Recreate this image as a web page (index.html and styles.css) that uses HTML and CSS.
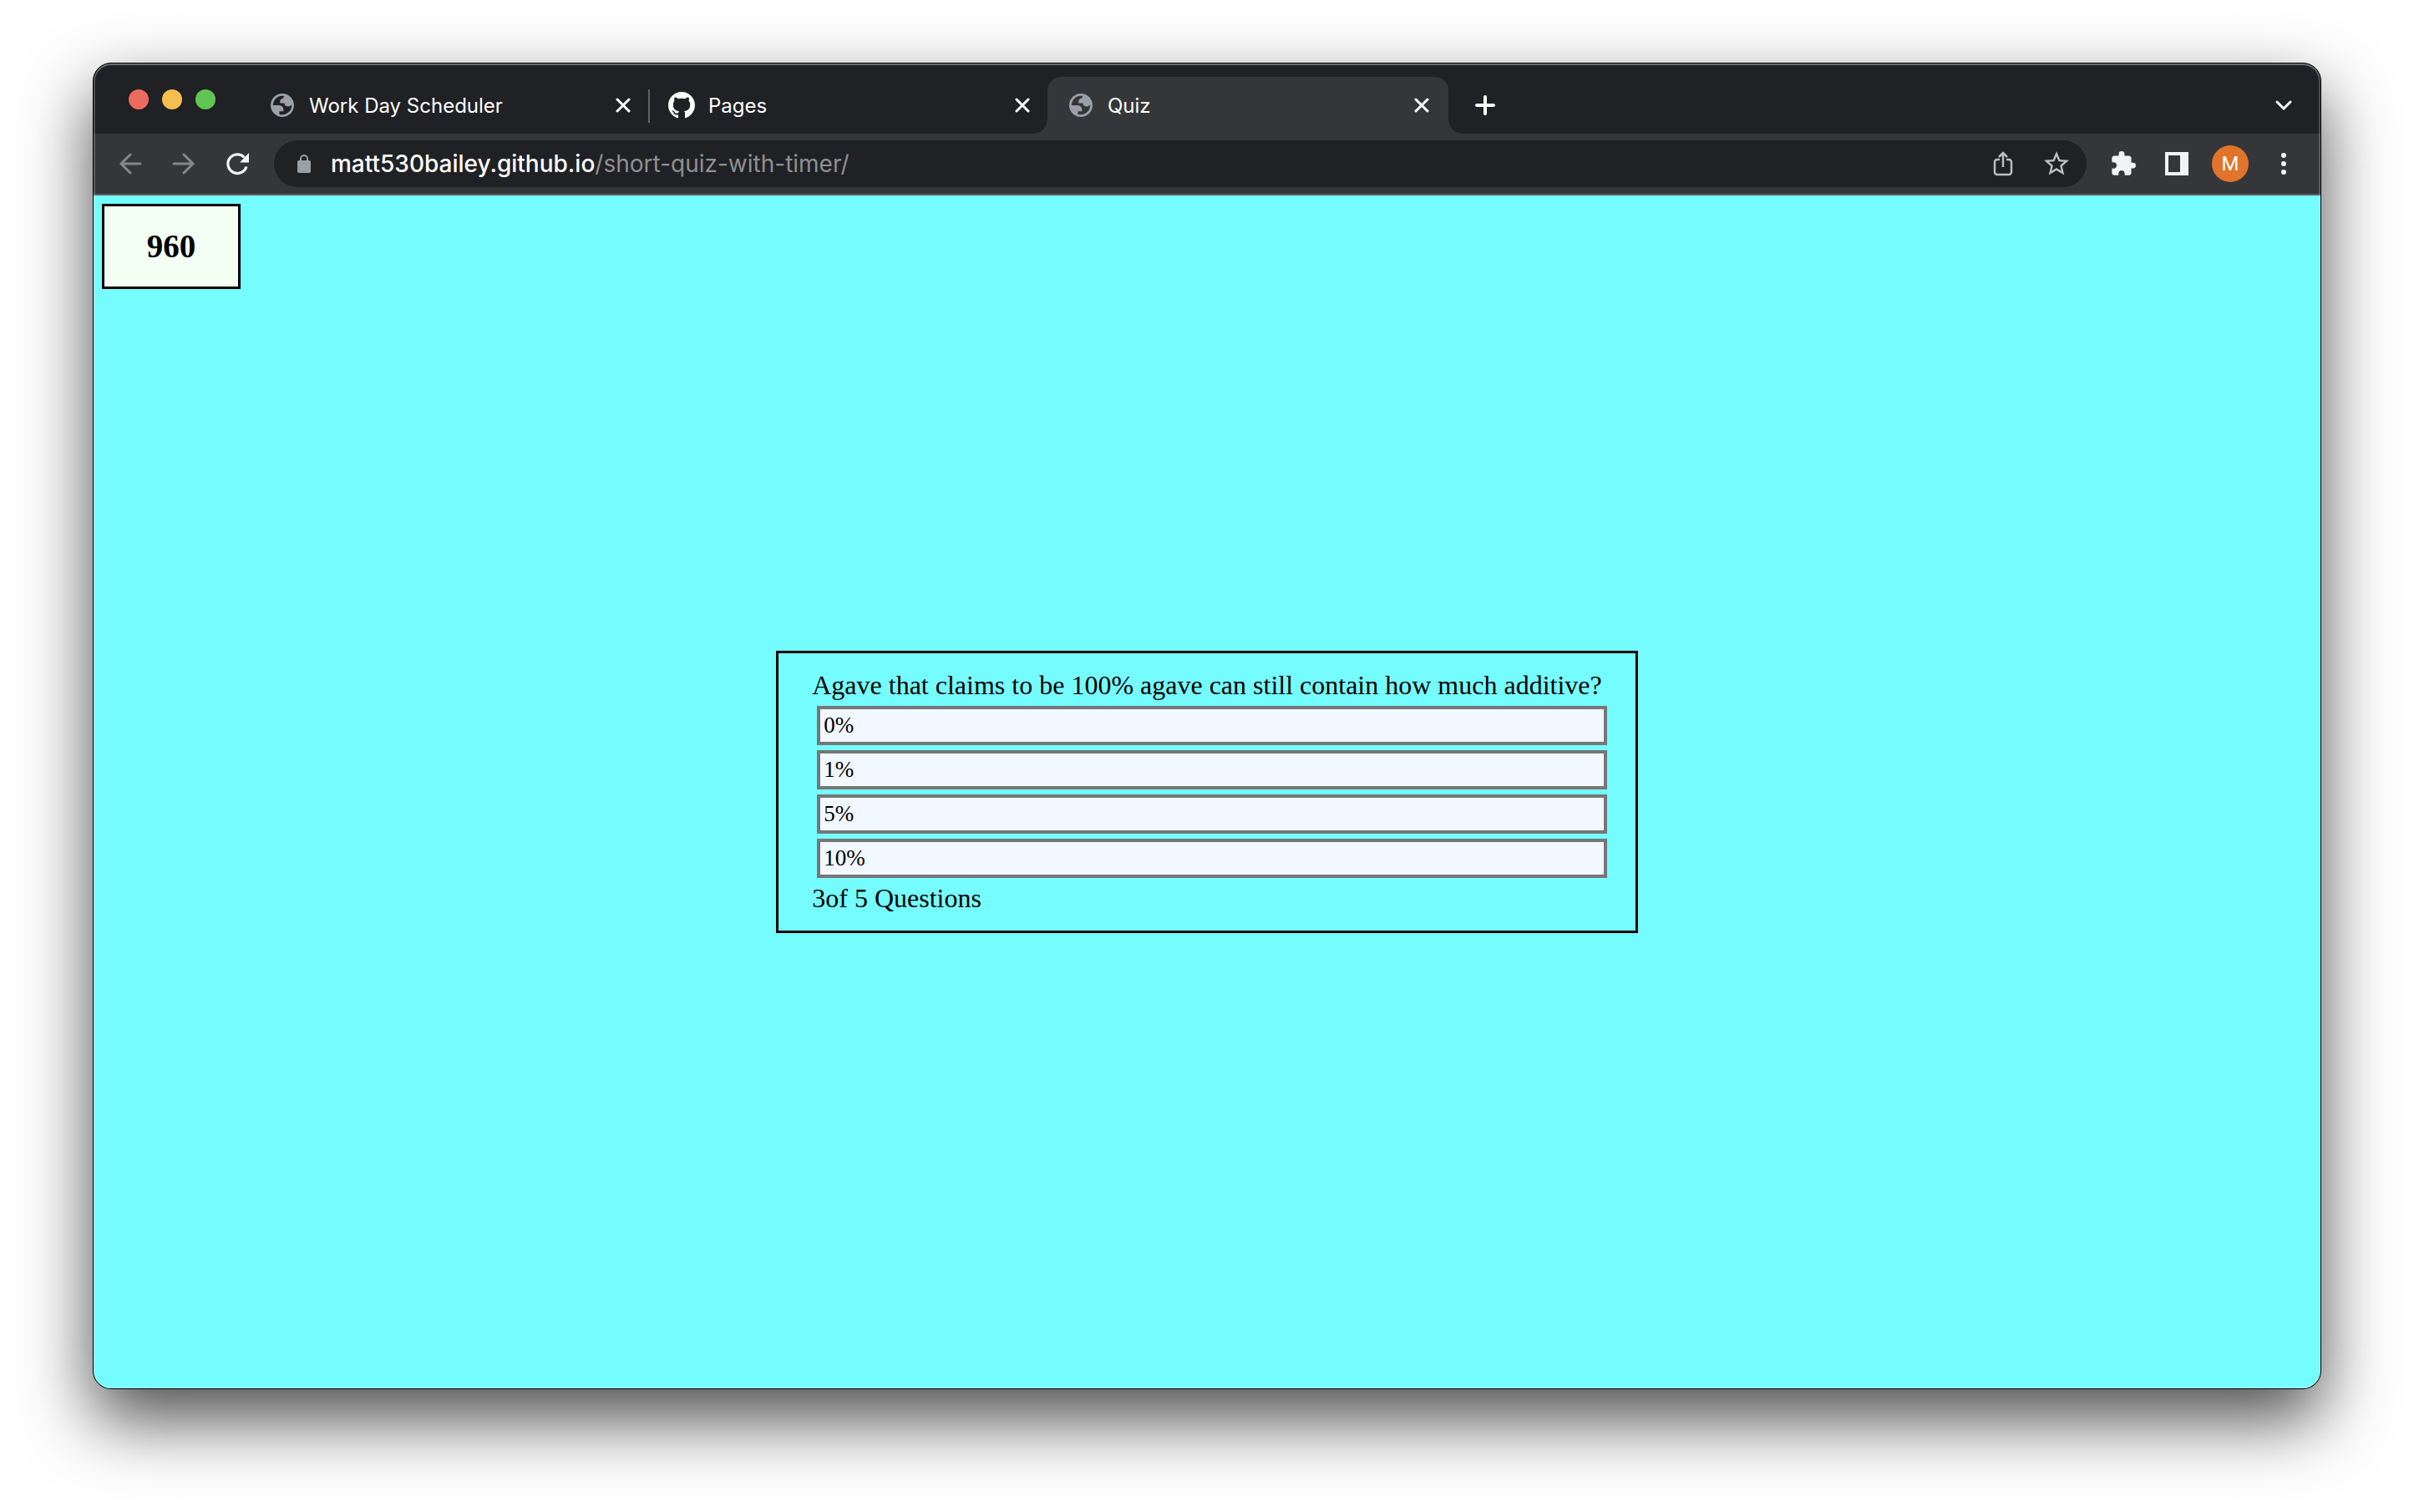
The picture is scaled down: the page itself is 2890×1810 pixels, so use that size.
FILE: index.html
```html
<!DOCTYPE html>
<html lang="en">
<head>
<meta charset="utf-8">
<title>Quiz</title>
<link rel="stylesheet" href="styles.css">
</head>
<body>
<svg class="sprite" aria-hidden="true">
  <symbol id="globe" viewBox="2 2 20 20"><path fill-rule="evenodd" d="M12 2C6.480 2 2 6.480 2 12s4.480 10 10 10 10-4.480 10-10S17.520 2 12 2zM4 12h4.400c3.407.022 4.922 1.730 4.543 5.127H9.488v2.470a8.004 8.004 0 0 0 10.498-8.083C19.327 12.504 18.332 13 17 13c-2.137 0-3.206-.916-3.206-2.750h-3.748c-.274-2.728.683-4.092 2.870-4.092 0-.975.327-1.597.811-1.970A8.004 8.004 0 0 0 4 12z"/></symbol>
  <symbol id="close" viewBox="0 0 18 18"><path d="M2 2l14 14M16 2L2 16"/></symbol>
</svg>
<div class="window">
  <header class="tab-strip">
    <div class="lights">
      <button class="light red" aria-label="Close window"></button>
      <button class="light yellow" aria-label="Minimize window"></button>
      <button class="light green" aria-label="Zoom window"></button>
    </div>
    <nav class="tabs" aria-label="Tabs">
      <div class="tab">
        <span class="favicon"><svg class="globe" width="28" height="28"><use href="#globe"/></svg></span>
        <span class="tab-title">Work Day Scheduler</span>
        <button class="icon-button" aria-label="Close Work Day Scheduler"><svg class="line" width="18" height="18"><use href="#close"/></svg></button>
      </div>
      <div class="tab divided">
        <span class="favicon"><svg width="32" height="32" viewBox="0 0 16 16" fill="#fff"><path d="M8 0C3.580 0 0 3.580 0 8c0 3.540 2.290 6.530 5.470 7.590.4.070.55-.17.55-.38 0-.19-.01-.82-.01-1.490-2.010.37-2.530-.49-2.690-.94-.09-.23-.48-.94-.82-1.130-.28-.15-.68-.52-.01-.53.63-.01 1.080.58 1.230.82.72 1.210 1.870.87 2.330.66.07-.52.28-.87.51-1.070-1.780-.2-3.640-.89-3.640-3.950 0-.87.31-1.590.82-2.150-.08-.2-.36-1.020.08-2.120 0 0 .67-.21 2.200.82.64-.18 1.320-.27 2-.27s1.360.09 2 .27c1.530-1.040 2.200-.82 2.200-.82.44 1.100.16 1.920.08 2.120.51.56.82 1.270.82 2.150 0 3.070-1.870 3.750-3.650 3.950.29.25.54.73.54 1.480 0 1.070-.01 1.930-.01 2.200 0 .21.15.46.55.38A8.010 8.010 0 0 0 16 8c0-4.420-3.580-8-8-8z"/></svg></span>
        <span class="tab-title">Pages</span>
        <button class="icon-button" aria-label="Close Pages"><svg class="line" width="18" height="18"><use href="#close"/></svg></button>
      </div>
      <div class="tab active">
        <span class="favicon"><svg class="globe" width="28" height="28"><use href="#globe"/></svg></span>
        <span class="tab-title">Quiz</span>
        <button class="icon-button" aria-label="Close Quiz"><svg class="line" width="18" height="18"><use href="#close"/></svg></button>
      </div>
    </nav>
    <button class="icon-button" aria-label="New tab"><svg class="line thick" width="24" height="24" viewBox="0 0 24 24"><path d="M12 2v20M2 12h20"/></svg></button>
    <button class="icon-button tab-search" aria-label="Search tabs"><svg class="line" width="20" height="14" viewBox="0 0 20 14"><path d="M2 3l8 8 8-8"/></svg></button>
  </header>

  <div class="toolbar">
    <button class="icon-button dim" aria-label="Back"><svg class="line" width="28" height="28" viewBox="0 0 28 28"><path d="M14 3L3 14l11 11M3 14h23"/></svg></button>
    <button class="icon-button dim" aria-label="Forward"><svg class="line" width="28" height="28" viewBox="0 0 28 28"><path d="M14 3l11 11-11 11M25 14H2"/></svg></button>
    <button class="icon-button" aria-label="Reload"><svg width="28" height="28" viewBox="0 0 28 28"><path d="M22.500 6.500A11.300 11.300 0 1 0 25 17.500" fill="none" stroke="#f1f3f4" stroke-width="3.200"/><path d="M28 1v11.500H17z" fill="#f1f3f4"/></svg></button>
    <div class="omnibox">
      <svg width="16" height="22" viewBox="0 0 16 22"><path d="M4 9V5a4 4 0 0 1 8 0v4" fill="none" stroke="#9aa0a6" stroke-width="2"/><rect y="7" width="16" height="15" rx="2" fill="#9aa0a6"/></svg>
      <div class="address" role="textbox" aria-label="Address" contenteditable="true" spellcheck="false">matt530bailey.github.io<span class="path">/short-quiz-with-timer/</span></div>
      <button class="icon-button" aria-label="Share"><svg width="24" height="30" viewBox="0 0 24 30" fill="none" stroke="#bdbec0" stroke-width="2.500"><path d="M8 10H5a3 3 0 0 0-3 3v12a3 3 0 0 0 3 3h14a3 3 0 0 0 3-3V13a3 3 0 0 0-3-3h-3M12 19V3M7 7l5-5 5 5"/></svg></button>
      <button class="icon-button" aria-label="Bookmark this page"><svg width="30" height="30" viewBox="2 2 20 20"><path fill="#bdbec0" d="M22 9.240l-7.190-.62L12 2 9.190 8.630 2 9.240l5.460 4.730L5.820 21 12 17.270 18.180 21l-1.630-7.030L22 9.240zM12 15.400l-3.760 2.270 1-4.280-3.320-2.880 4.380-.38L12 6.100l1.710 4.040 4.380.38-3.320 2.880 1 4.280L12 15.400z"/></svg></button>
    </div>
    <button class="icon-button" aria-label="Extensions"><svg width="30" height="30" viewBox="1 1 22 22"><path fill="#f1f3f4" d="M20.500 11H19V7c0-1.100-.9-2-2-2h-4V3.500a2.500 2.500 0 0 0-5 0V5H4c-1.100 0-1.990.9-1.990 2v3.800H3.500c1.490 0 2.700 1.210 2.700 2.700s-1.210 2.700-2.700 2.700H2V20c0 1.100.9 2 2 2h3.800v-1.500c0-1.490 1.210-2.700 2.700-2.700s2.700 1.210 2.700 2.700V22H17c1.100 0 2-.9 2-2v-4h1.500a2.500 2.500 0 0 0 0-5z"/></svg></button>
    <button class="icon-button" aria-label="Side panel"><svg width="28" height="28" viewBox="0 0 28 28"><path fill="#f1f3f4" fill-rule="evenodd" d="M0 0h28v28H0zM4 4v20h14V4z"/></svg></button>
    <button class="icon-button" aria-label="Profile"><span class="avatar">M</span></button>
    <button class="icon-button" aria-label="Menu"><svg width="6" height="26" viewBox="0 0 6 26" fill="#f1f3f4"><circle cx="3" cy="3" r="3"/><circle cx="3" cy="13" r="3"/><circle cx="3" cy="23" r="3"/></svg></button>
  </div>

  <main class="page">
    <div class="timer">960</div>
    <section class="quiz">
      <div>Agave that claims to be 100% agave can still contain how much additive?</div>
      <div class="answers">
        <button class="answer">0%</button>
        <button class="answer">1%</button>
        <button class="answer">5%</button>
        <button class="answer">10%</button>
      </div>
      <div>3of 5 Questions</div>
    </section>
  </main>
</div>
</body>
</html>
```

FILE: styles.css
```css
* {
  box-sizing: border-box;
}

body {
  display: flex;
  min-height: 100vh;
  margin: 0;
  padding: 75px 111px 147px;
  background: #fff;
}

button {
  margin: 0;
  padding: 0;
  border: 0;
  background: none;
  font: inherit;
  color: inherit;
}

svg {
  display: block;
  overflow: visible;
}

.sprite {
  position: absolute;
  width: 0;
  height: 0;
}

/* Browser window */
.window {
  position: relative;
  display: flex;
  flex: 1;
  flex-direction: column;
  min-width: 0;
  border: 1px solid #000;
  border-radius: 22px;
  overflow: hidden;
  background: #202124;
  box-shadow: 0 36px 84px rgba(0, 0, 0, 0.7);
  font-family: Inter, "Liberation Sans", sans-serif;
  font-size: 24px;
  color: #fff;
}

/* Light rim drawn over the window's edge */
.window::after {
  content: "";
  position: absolute;
  inset: 0;
  border-radius: 21px;
  box-shadow: inset 0 2px rgba(255, 255, 255, 0.2), inset 0 0 0 2px rgba(255, 255, 255, 0.2);
  pointer-events: none;
}

.icon-button {
  display: flex;
  flex: none;
  align-items: center;
  justify-content: center;
  width: 40px;
  height: 40px;
}

.line {
  fill: none;
  stroke: #fff;
  stroke-width: 3;
  stroke-linecap: round;
}

.thick {
  stroke-width: 4;
}

.dim .line {
  stroke: #86878a;
}

/* Tab strip */
.tab-strip {
  display: flex;
  align-items: center;
  height: 84px;
  padding: 16px 24px 0 42px;
}

.lights {
  display: flex;
  gap: 16px;
  margin-right: 40px;
  padding-bottom: 14px;
}

.light {
  width: 24px;
  height: 24px;
  border-radius: 50%;
}

.red {
  background: #ed6a5e;
}

.yellow {
  background: #f5bf4f;
}

.green {
  background: #61c554;
}

.tabs {
  display: flex;
  margin-right: 24px;
}

.tab {
  position: relative;
  display: flex;
  align-items: center;
  width: 478px;
  height: 68px;
  padding: 0 10px 0 24px;
}

.divided::before {
  content: "";
  position: absolute;
  top: 15px;
  left: 0;
  width: 2px;
  height: 40px;
  background: #5f6063;
}

.active {
  width: 480px;
  padding-right: 12px;
  border-radius: 16px 16px 0 0;
  background: #35363a;
}

.active::before,
.active::after {
  content: "";
  position: absolute;
  bottom: 0;
  width: 16px;
  height: 16px;
}

.active::before {
  right: 100%;
  background: radial-gradient(circle at 0 0, transparent 15px, #35363a 16px);
}

.active::after {
  left: 100%;
  background: radial-gradient(circle at 100% 0, transparent 15px, #35363a 16px);
}

.favicon {
  display: flex;
  justify-content: center;
  width: 32px;
}

.globe {
  fill: #9aa0a6;
}

.tab-title {
  flex: 1;
  margin-left: 16px;
}

.tab-search {
  margin-left: auto;
}

/* Toolbar */
.toolbar {
  display: flex;
  align-items: center;
  gap: 24px;
  height: 74px;
  padding: 0 24px;
  border-bottom: 2px solid #5b5c60;
  background: #35363a;
}

.omnibox {
  display: flex;
  flex: 1;
  align-items: center;
  gap: 24px;
  height: 56px;
  padding: 0 16px 0 28px;
  border-radius: 28px;
  background: #202124;
}

.address {
  flex: 1;
  font-size: 28px;
  font-weight: 500;
}

.path {
  font-weight: 400;
  color: #8f9092;
}

.avatar {
  flex: none;
  width: 44px;
  border-radius: 50%;
  background: #e0742b;
  font-family: Roboto, sans-serif;
  line-height: 44px;
  text-align: center;
}

/* Quiz page */
.page {
  display: grid;
  flex: 1;
  grid-template-rows: 1fr auto 1fr;
  background: #75fcff;
  font-family: "Liberation Serif", serif;
  font-size: 32px;
  line-height: 37px;
  color: #000;
}

.timer {
  align-self: start;
  width: 166px;
  margin: 10px;
  border: 3px solid #000;
  background: #f3fff2;
  font-size: 39px;
  font-weight: bold;
  line-height: 96px;
  text-align: center;
}

.quiz {
  justify-self: center;
  padding: 20px 40px;
  border: 3px solid #000;
}

.answers {
  display: grid;
  gap: 6px;
  margin: 6px -6px 6px 6px;
}

.answer {
  height: 47px;
  padding: 0 4px;
  border: 4px solid #767676;
  background: #f1f8ff;
  font-size: 27px;
  text-align: left;
}
```
